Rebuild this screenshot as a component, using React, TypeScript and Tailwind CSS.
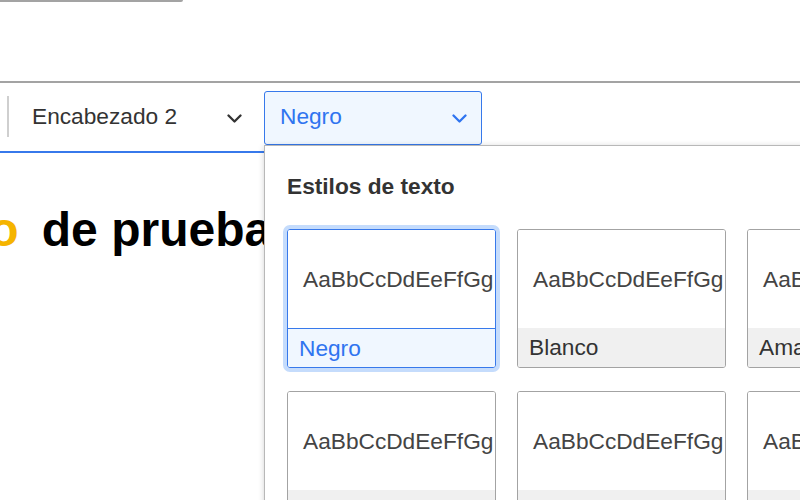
import React from "react";

const Chevron = ({ className }: { className: string }) => (
  <svg width="15" height="9" viewBox="0 0 15 9" fill="none" className={className}>
    <path d="M1.5 1.5l6 6 6-6" stroke="currentColor" strokeWidth="2.3" strokeLinecap="round" strokeLinejoin="round" />
  </svg>
);

const styles = [
  { name: "Negro", on: true },
  { name: "Blanco" },
  { name: "Amarillo" },
  { name: "Rojo" },
  { name: "Verde" },
  { name: "Azul" },
];

export default function App() {
  return (
    <div className="relative h-[500px] w-[800px] overflow-hidden bg-white font-['Liberation_Sans',Arial,sans-serif] text-[#333]">
      <div className="h-[2px] w-[183px] rounded-br-sm bg-[#a3a3a3]" />
      <div className="h-[79px]" />

      {/* toolbar */}
      <div className="flex h-[70px] items-start border-t-2 border-[#a3a3a3] pt-[8px]">
        <div className="ml-[7px] mt-[5px] h-[41px] w-[2px] bg-[#cfcfcf]" />
        <div className="ml-[7px] flex h-[54px] w-[241px] items-center justify-between pb-[3px] pl-[16px] pr-[15px]">
          <span className="text-[22.7px]">Encabezado 2</span>
          <Chevron className="mt-[3px] text-[#333]" />
        </div>
        <div className="relative z-10 ml-[7px]">
          <div className="flex h-[54px] w-[218px] items-center justify-between rounded-[3px] border border-[#3779eb] bg-[#f0f7ff] pb-[3px] pl-[15px] pr-[14px]">
            <span className="text-[22.7px] text-[#2f74f0]">Negro</span>
            <Chevron className="mt-[3px] text-[#2f74f0]" />
          </div>

          {/* dropdown panel */}
          <div className="absolute left-0 top-full w-[600px] border border-[#b8b8b8] bg-white pl-[22px] pt-[27px] pb-[40px] shadow-[0_1px_6px_rgba(0,0,0,0.18)]">
            <div className="text-[22.7px] font-bold leading-[26px] text-[#333]">Estilos de texto</div>
            <div className="mt-[30px] grid grid-cols-[repeat(3,209px)] gap-x-[21px] gap-y-[23px]">
              {styles.map((s) => (
                <div
                  key={s.name}
                  className={
                    s.on
                      ? "overflow-hidden rounded-[3px] border border-[#3779eb] shadow-[0_0_0_4px_#c5dcfc]"
                      : "overflow-hidden rounded-[3px] border border-[#a3a3a3]"
                  }
                >
                  <div className="flex h-[98px] items-center overflow-hidden whitespace-nowrap bg-white pl-[15px] text-[22.7px] text-[#444]">
                    AaBbCcDdEeFfGg
                  </div>
                  <div
                    className={
                      s.on
                        ? "flex h-[39px] items-center border-t border-[#3779eb] bg-[#f0f7ff] px-[11px] text-[22.7px] text-[#2f74f0]"
                        : "flex h-[39px] items-center bg-[#f0f0f0] px-[11px] text-[22.7px] text-[#333]"
                    }
                  >
                    {s.name}
                  </div>
                </div>
              ))}
            </div>
          </div>
        </div>
      </div>

      {/* editable */}
      <div className="border-t-2 border-[#3779eb] pt-[49px]">
        <h2 className="-ml-[106px] whitespace-nowrap text-[48px] font-bold leading-[56px] text-black">
          <span className="text-[#f5b400]">Texto</span> <span className="ml-[10px]">de prueba</span>
        </h2>
      </div>
    </div>
  );
}
